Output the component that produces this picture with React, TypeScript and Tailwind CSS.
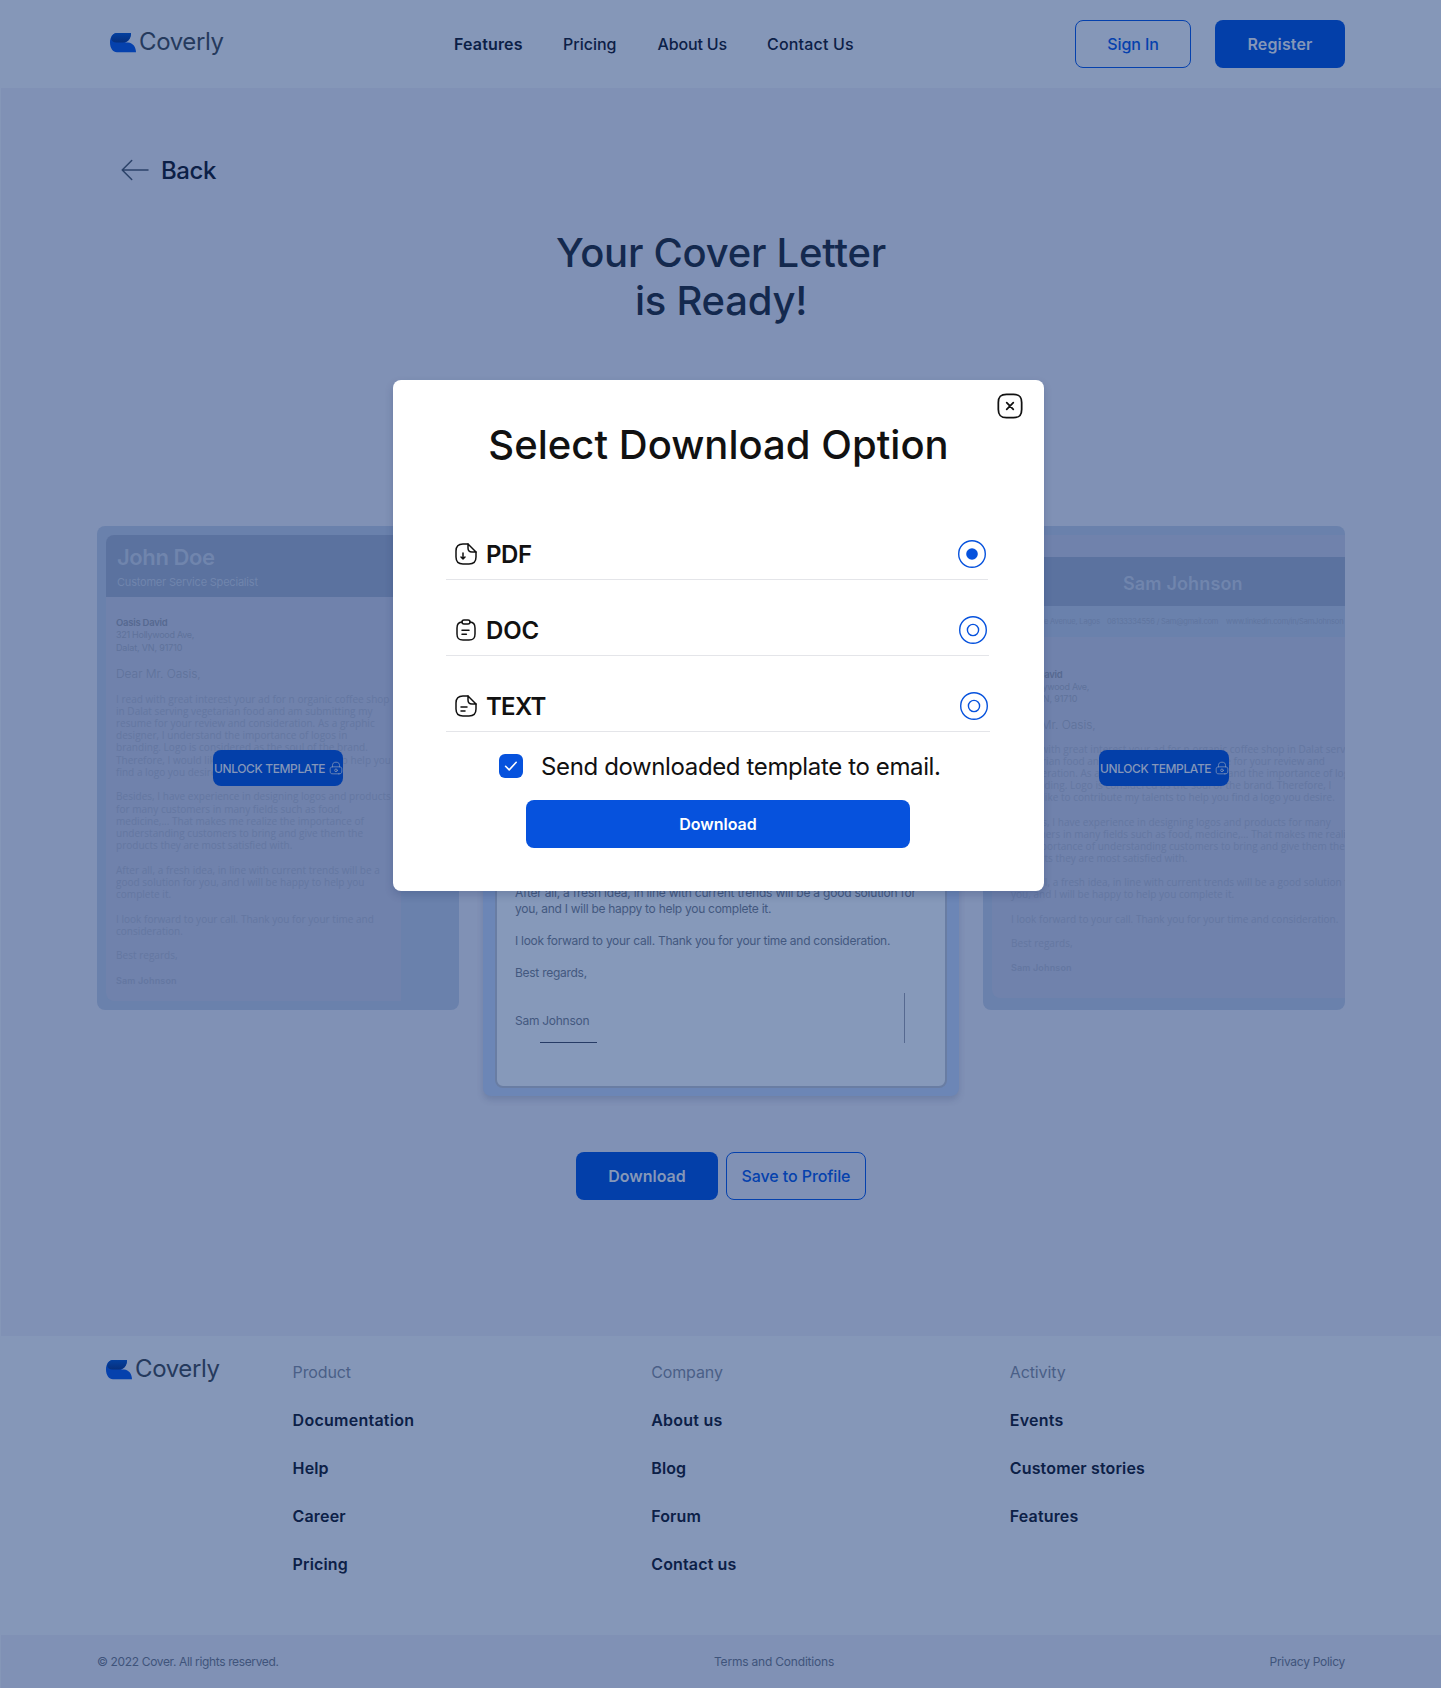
import type { ReactNode } from "react";

function Logo({ id }: { id: string }) {
  return (
    <div className="flex items-start">
      <svg width="26" height="20" viewBox="0 0 26 20" className="mt-px">
        <defs>
          <linearGradient id={id} x1="0" y1="0" x2="0" y2="1">
            <stop offset="0" stopColor="#04409f" />
            <stop offset="1" stopColor="#062f7c" />
          </linearGradient>
        </defs>
        <path d="M7 0H21C21 5 18.6 8.6 15 9.4H18C23 9.8 26 14 26 19.3H7C3 19.3 0 15.4 0 9.6C0 3.8 3 0 7 0Z" fill="#0541ad" />
        <path d="M7 0H21C21 5.5 17.6 9.5 13 9.5H6.5C3.4 9.5 1.6 8.2 1 5.5C2 2 4 0 7 0Z" fill={`url(#${id})`} />
      </svg>
      <span className="-mt-1 -mb-px ml-[3px] text-2xl leading-[28px] tracking-[-0.38px] text-[#253a5d]">Coverly</span>
    </div>
  );
}

function Glyph({ size, stroke = 1.5, children, className = "" }: { size: number; stroke?: number; children: ReactNode; className?: string }) {
  return (
    <svg width={size} height={size} viewBox="0 0 24 24" fill="none" stroke="currentColor" strokeWidth={stroke} strokeLinecap="round" strokeLinejoin="round" className={`shrink-0 ${className}`}>
      {children}
    </svg>
  );
}

const page = (
  <>
    <path d="M22 10v5c0 5-2 7-7 7H9c-5 0-7-2-7-7V9c0-5 2-7 7-7h5" />
    <path d="M22 10h-4c-3 0-4-1-4-4V2l8 8Z" />
  </>
);

function UnlockButton() {
  return (
    <button className="absolute left-[116px] top-[224px] flex h-9 w-[130px] items-center rounded-lg bg-[#033fa9] pl-px text-[#8496b9]">
      <span className="whitespace-nowrap pt-0.5 text-xs font-medium tracking-[-0.38px]">UNLOCK TEMPLATE</span>
      <Glyph size={14} stroke={1.3} className="ml-auto">
        <path d="M6 10V8c0-3.31 1-6 6-6s6 2.69 6 6v2" />
        <path d="M17 22H7c-4 0-5-1-5-5v-2c0-4 1-5 5-5h10c4 0 5 1 5 5v2c0 4-1 5-5 5Z" />
        <circle cx="12" cy="16" r="2.3" />
      </Glyph>
    </button>
  );
}

const leftLetter = `I read with great interest your ad for n organic coffee shop
in Dalat serving vegetarian food and am submitting my
resume for your review and consideration. As a graphic
designer, I understand the importance of logos in
branding. Logo is considered as the soul of the brand.
Therefore, I would like to contribute my talents to help you
find a logo you desire.

Besides, I have experience in designing logos and products
for many customers in many fields such as food,
medicine,... That makes me realize the importance of
understanding customers to bring and give them the
products they are most satisfied with.

After all, a fresh idea, in line with current trends will be a
good solution for you, and I will be happy to help you
complete it.

I look forward to your call. Thank you for your time and
consideration.

Best regards,`;

const rightLetter = `I read with great interest your ad for n organic coffee shop in Dalat serving
vegetarian food and am submitting my resume for your review and
consideration. As a graphic designer, I understand the importance of logos
in branding. Logo is considered as the soul of the brand. Therefore, I
would like to contribute my talents to help you find a logo you desire.

Besides, I have experience in designing logos and products for many
customers in many fields such as food, medicine,... That makes me realize
the importance of understanding customers to bring and give them the
products they are most satisfied with.

After all, a fresh idea, in line with current trends will be a good solution for
you, and I will be happy to help you complete it.

I look forward to your call. Thank you for your time and consideration.

Best regards,`;

const centerOpening = "After all, a fresh idea, in line with current trends will be a good solution for";

const centerLetter = `you, and I will be happy to help you complete it.

I look forward to your call. Thank you for your time and consideration.

Best regards,


Sam Johnson`;

function LeftCard() {
  return (
    <article className="relative h-[484px] w-[362px] overflow-hidden rounded-lg bg-[#6a81ac] pl-[9px] pt-[9px]">
      <div className="h-[466px] w-[295px] overflow-hidden rounded-lg rounded-r-none bg-[#7082ac]">
        <div className="h-[62px] bg-[#5b729f] pl-[11px] pt-[10px] text-[#7085ad]">
          <p className="text-[22px] font-semibold leading-6 tracking-[-0.4px]">John Doe</p>
          <p className="mt-[5px] text-[11px] leading-4 tracking-[-0.2px]">Customer Service Specialist</p>
        </div>
        <div className="whitespace-pre pl-[10px] pt-[19.5px] text-[#6477a1]">
          <p className="text-[9.5px] font-semibold leading-[12.4px] tracking-[-0.25px] text-[#566991]">Oasis David</p>
          <p className="text-[9px] leading-[12.4px] tracking-[-0.28px] text-[#5f729b]">321 Hollywood Ave,</p>
          <p className="mt-[0.7px] text-[9px] leading-[12.4px] tracking-[-0.15px] text-[#5f729b]">Dalat, VN, 91710</p>
          <p className="mt-[11.3px] text-xs font-light leading-4 tracking-[-0.05px] text-[#5f729b]">Dear Mr. Oasis,</p>
          <p className="mt-[10.9px] font-['Open_Sans'] text-[10px] leading-[12.22px] tracking-[0.03px]">{leftLetter}</p>
          <p className="mt-[13.6px] text-[9px] font-semibold leading-3 tracking-[0.15px]">Sam Johnson</p>
        </div>
      </div>
      <UnlockButton />
    </article>
  );
}

function RightCard() {
  return (
    <article className="relative h-[484px] w-[362px] overflow-hidden rounded-lg bg-[#6a81ac] pl-[9px] pt-[9px]">
      <div className="h-[463px] w-[420px] overflow-hidden rounded-lg bg-[#7082ac] pt-[22px]">
        <div className="h-[49px] bg-[#5b729f] pl-[131px] pt-[15px] text-lg font-semibold leading-6 tracking-[0.15px] text-[#7085ad]">Sam Johnson</div>
        <div className="flex h-[31px] items-center whitespace-nowrap bg-[#6a81ac] pt-px text-[7.5px] tracking-[-0.17px] text-[#60759f]">
          <span className="w-[108px] text-right">23 Grace Avenue, Lagos</span>
          <span className="ml-[7px] w-[119px]">08133334556 / Sam@gmail.com</span>
          <span>www.linkedin.com/in/SamJohnson</span>
        </div>
        <div className="whitespace-pre pl-[19px] pt-[31.5px] text-[#6477a1]">
          <p className="text-[9.5px] font-semibold leading-[12.2px] tracking-[-0.25px] text-[#566991]">Oasis David</p>
          <p className="text-[9px] leading-[12.2px] tracking-[-0.28px] text-[#5f729b]">321 Hollywood Ave,</p>
          <p className="text-[9px] leading-[12.2px] tracking-[-0.15px] text-[#5f729b]">Dalat, VN, 91710</p>
          <p className="mt-[11.5px] text-xs font-light leading-4 tracking-[-0.05px] text-[#5f729b]">Dear Mr. Oasis,</p>
          <p className="mt-[10.2px] font-['Open_Sans'] text-[10px] leading-[12.13px] tracking-[0.03px]">{rightLetter}</p>
          <p className="mt-[13.2px] text-[9px] font-semibold leading-3 tracking-[0.15px]">Sam Johnson</p>
        </div>
      </div>
      <UnlockButton />
    </article>
  );
}

function CenterCard() {
  return (
    <article className="h-[656px] w-[476px] rounded-lg bg-[#6c86b6] px-3 pb-2 pt-3 shadow-[0_4px_6px_rgba(40,60,110,0.2)]">
      <div className="relative flex h-full flex-col justify-end rounded-lg border-2 border-[#697da3] bg-[#8699ba] pb-[57px] pl-[18px] text-xs leading-4 text-[#43587f]">
        <p className="whitespace-pre tracking-[-0.21px]">{centerOpening}</p>
        <p className="whitespace-pre tracking-[-0.27px]">{centerLetter}</p>
        <span className="absolute bottom-[43px] left-[43px] h-px w-[57px] bg-[#263b65]" />
        <span className="absolute bottom-[43px] right-[40px] h-[50px] w-px bg-[#566990]" />
      </div>
    </article>
  );
}

function Radio({ checked = false }: { checked?: boolean }) {
  return (
    <svg width="28" height="28" viewBox="0 0 28 28" fill="none" stroke="#0652dd" strokeWidth="1.4" className="mr-[2px] ml-auto">
      <circle cx="14" cy="14" r="13.3" />
      {checked ? <circle cx="14" cy="14" r="5.8" fill="#0652dd" stroke="none" /> : <circle cx="14" cy="14" r="5.6" />}
    </svg>
  );
}

function DownloadModal() {
  return (
    <section role="dialog" className="absolute left-[393px] top-[380px] h-[511px] w-[651px] rounded-lg bg-white pt-[41px] text-[#111] shadow-[0_4px_8px_rgba(20,40,90,0.2)]">
      <Glyph size={28} className="absolute right-[20px] top-[12px]">
        <path d="m9.17 14.83 5.66-5.66M14.83 14.83 9.17 9.17" />
        <path d="M9 22h6c5 0 7-2 7-7V9c0-5-2-7-7-7H9C4 2 2 4 2 9v6c0 5 2 7 7 7Z" />
      </Glyph>
      <h2 className="text-center text-[40px] font-medium leading-[48px] tracking-[0.02px]">Select Download Option</h2>
      <div className="ml-[53px] mt-[35px] text-2xl font-semibold">
        <div className="flex h-[76px] w-[542px] items-end border-b border-[#e4e5e9] pb-[11px]">
          <div className="flex h-7 w-full items-center pl-2">
            <Glyph size={24}>{page}<path d="M9 11v6l2-2M9 17l-2-2" /></Glyph>
            <span className="ml-2 pt-0.5 tracking-[-0.4px]">PDF</span>
            <Radio checked />
          </div>
        </div>
        <div className="flex h-[76px] w-[543px] items-end border-b border-[#e4e5e9] pb-[11px]">
          <div className="flex h-7 w-full items-center pl-2">
            <Glyph size={24}>
              <path d="M8 12.2h7M8 16.2h4.38M10 6h4c2 0 2-1 2-2 0-2-1-2-2-2h-4c-1 0-2 0-2 2s1 2 2 2Z" />
              <path d="M16 4.02c3.33.18 5 1.41 5 5.98v6c0 4-1 6-6 6H9c-5 0-6-2-6-6v-6c0-4.56 1.67-5.8 5-5.98" />
            </Glyph>
            <span className="ml-2 pt-0.5 tracking-[-0.15px]">DOC</span>
            <Radio />
          </div>
        </div>
        <div className="flex h-[76px] w-[544px] items-end border-b border-[#e4e5e9] pb-[11px]">
          <div className="flex h-7 w-full items-center pl-2">
            <Glyph size={24}>{page}<path d="M7 13h6M7 17h4" /></Glyph>
            <span className="ml-2 pt-0.5 tracking-[-0.73px]">TEXT</span>
            <Radio />
          </div>
        </div>
      </div>
      <label className="ml-[106px] mt-[22px] flex h-6 items-center">
        <span className="flex size-6 items-center justify-center rounded-md bg-[#0652dd]">
          <svg width="14" height="12" viewBox="0 0 14 12" fill="none" stroke="white" strokeWidth="1.6" strokeLinecap="round" strokeLinejoin="round">
            <path d="m1.6 6.3 3.6 3.6 7-7.6" />
          </svg>
        </span>
        <span className="ml-[18px] whitespace-nowrap pt-0.5 text-2xl tracking-[-0.375px]">Send downloaded template to email.</span>
      </label>
      <button className="ml-[133px] mt-[22px] block h-12 w-96 rounded-lg bg-[#0652dd] font-semibold text-white">Download</button>
    </section>
  );
}

const columns = [
  { title: "Product", links: ["Documentation", "Help", "Career", "Pricing"] },
  { title: "Company", links: ["About us", "Blog", "Forum", "Contact us"] },
  { title: "Activity", links: ["Events", "Customer stories", "Features"] },
];

export default function App() {
  return (
    <div className="relative h-[1688px] w-[1441px] overflow-hidden bg-[#8597b8] pl-px font-['Inter',sans-serif] text-base text-[#0c2047]">
      <header className="flex h-[88px] items-center">
        <div className="-mt-[2px] ml-[109px] w-[344px]"><Logo id="leaf-top" /></div>
        <nav className="flex whitespace-nowrap font-medium">
          <a className="w-[109px] font-semibold tracking-[0.15px]">Features</a>
          <a className="w-[94.5px]">Pricing</a>
          <a className="w-[109.5px] tracking-[-0.15px]">About Us</a>
          <a className="tracking-[0.17px]">Contact Us</a>
        </nav>
        <div className="ml-auto mr-[96px] flex gap-6">
          <button className="h-12 w-[116px] rounded-lg border border-[#0541ad] font-medium tracking-[-0.1px] text-[#0541ad]">Sign In</button>
          <button className="h-12 w-[130px] rounded-lg bg-[#033fa9] font-semibold tracking-[0.15px] text-[#8597b8]">Register</button>
        </div>
      </header>

      <main className="flex h-[1248px] flex-col bg-[#8091b5]">
        <a className="ml-[120px] mt-[66px] flex h-8 items-center text-2xl font-medium">
          <svg width="28" height="22" viewBox="0 0 28 22" fill="none" stroke="#2b4269" strokeWidth="1.5" strokeLinecap="round" strokeLinejoin="round">
            <path d="M10.7 1.5 1.2 11l9.5 9.5M1.2 11H27" />
          </svg>
          <span className="ml-3 pt-0.5 tracking-[-0.4px]">Back</span>
        </a>
        <h1 className="mt-[43px] text-center text-[40px] font-medium leading-[48px] tracking-[-0.25px] text-[#14294e]">
          Your Cover Letter
          <br />
          is Ready!
        </h1>
        <div className="mx-24 mt-[115px] flex items-center justify-between">
          <LeftCard />
          <CenterCard />
          <RightCard />
        </div>
        <div className="mt-14 flex justify-center gap-2">
          <button className="h-12 w-[142px] rounded-lg bg-[#033fa9] font-semibold text-[#8597b8]">Download</button>
          <button className="h-12 w-[140px] rounded-lg border border-[#0541ad] font-medium tracking-[-0.1px] text-[#0541ad]">Save to Profile</button>
        </div>
      </main>

      <footer>
        <div className="flex h-[299px] pt-6">
          <div className="-mt-px ml-[105px] w-[186.6px]"><Logo id="leaf-bottom" /></div>
          {columns.map((c) => (
            <div key={c.title} className="flex w-[358.6px] flex-col gap-6">
              <h3 className="font-normal tracking-[-0.12px] text-[#4a5f87]">{c.title}</h3>
              {c.links.map((l) => (
                <a key={l} className="font-semibold tracking-[0.15px] first-of-type:tracking-[0.25px]">{l}</a>
              ))}
            </div>
          ))}
        </div>
        <div className="flex h-[53px] items-center bg-[#8091b5] px-24 text-xs text-[#3f547b]">
          <span className="w-[617px] whitespace-nowrap tracking-[-0.36px]">© 2022 Cover. All rights reserved.</span>
          <span className="whitespace-nowrap tracking-[-0.2px]">Terms and Conditions</span>
          <span className="ml-auto whitespace-nowrap tracking-[-0.28px]">Privacy Policy</span>
        </div>
      </footer>
      <DownloadModal />
    </div>
  );
}
